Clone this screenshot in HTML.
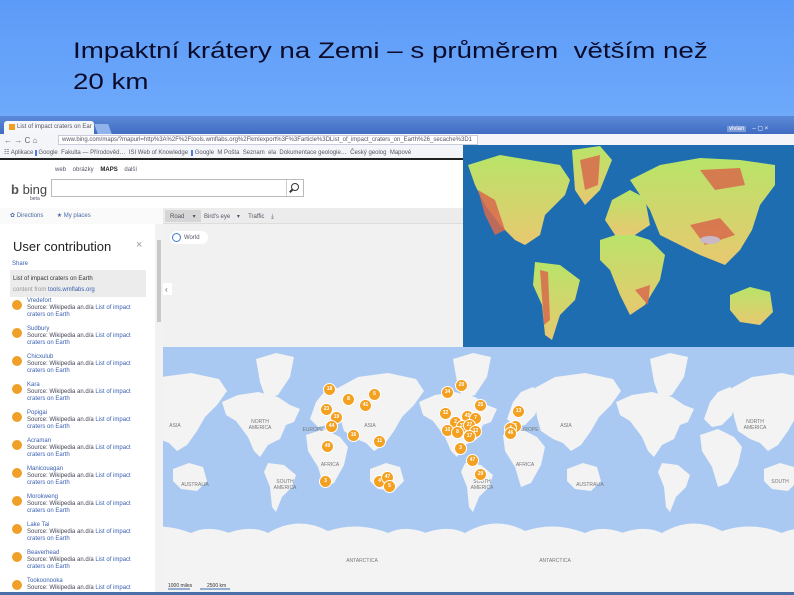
<!DOCTYPE html>
<html><head><meta charset="utf-8">
<style>
*{margin:0;padding:0;box-sizing:border-box}
body{width:794px;height:595px;overflow:hidden;position:relative;font-family:"Liberation Sans",sans-serif;background:#fff}
.abs{position:absolute}
.title{left:0;top:0;width:794px;height:116px;background:linear-gradient(#5c9bf8,#6ea9fa)}
.title h1{position:absolute;left:73px;top:35px;font-weight:normal;font-size:22px;line-height:31px;color:#0b0b2a;transform:scaleX(1.26);transform-origin:0 0;white-space:nowrap}
.sm{font-size:6px;color:#556;white-space:nowrap}
.cl{position:absolute;width:13px;height:13px;border-radius:50%;background:#f4a020;border:1.5px solid #fff;color:#fff;font-size:5px;text-align:center;line-height:10px;font-weight:bold}
.li{position:absolute;left:12px;font-size:6px;line-height:7px;color:#445;white-space:nowrap}
.li b{position:absolute;left:0;top:2px;width:10px;height:10px;border-radius:50%;background:#f0a028}
.li div{margin-left:15px}
.li a{color:#3a5fb0}
</style></head><body>
<div class="abs title"><h1>Impaktní krátery na Zemi – s průměrem&nbsp; větším než<br>20 km</h1></div>
<div class="abs" style="left:0;top:116px;width:794px;height:18px;background:linear-gradient(#5d8ad8,#3f6cc2)"></div>
<div class="abs" style="left:4px;top:121px;width:90px;height:13px;background:#f4f6fa;border-radius:3px 3px 0 0"></div>
<div class="abs" style="left:9px;top:124px;width:6px;height:6px;background:#f0a020"></div>
<div class="abs sm" style="left:17px;top:124px">List of impact craters on Ear ×</div>
<div class="abs" style="left:96px;top:124px;width:14px;height:10px;background:#8fb3ea;transform:skewX(20deg)"></div>
<div class="abs" style="left:727px;top:117px;width:66px;height:9px"><span class="sm" style="color:#fff;background:#7a9ad8;padding:0 2px">vivian</span><span class="sm" style="color:#fff;margin-left:6px">– ▢ ×</span></div>
<div class="abs" style="left:0;top:134px;width:794px;height:12px;background:#f4f5f8"></div>
<div class="abs sm" style="left:4px;top:136px;font-size:8px;color:#666">← → C ⌂</div>
<div class="abs" style="left:58px;top:135px;width:420px;height:10px;background:#fff;border:1px solid #ccd"></div>
<div class="abs sm" style="left:62px;top:137px">www.bing.com/maps/?mapurl=http%3A%2F%2Ftools.wmflabs.org%2Fkmlexport%3F%3Farticle%3DList_of_impact_craters_on_Earth%26_secache%3D1</div>
<div class="abs" style="left:0;top:146px;width:794px;height:12px;background:#f4f5f8"></div>
<div class="abs sm" style="left:4px;top:149px">☷ Aplikace <span style="background:#4a7be0;color:#fff">&nbsp;</span> Google &nbsp;Fakulta — Přírodověd… &nbsp;ISI Web of Knowledge &nbsp;<span style="background:#4a7be0;color:#fff">&nbsp;</span> Google &nbsp;M Pošta &nbsp;Seznam &nbsp;ela &nbsp;Dokumentace geologie… &nbsp;Český geolog &nbsp;Mapové</div>
<div class="abs" style="left:0;top:158px;width:794px;height:2px;background:#222"></div>
<div class="abs sm" style="left:55px;top:167px">web &nbsp;&nbsp; obrázky &nbsp;&nbsp; <b style="color:#222">MAPS</b> &nbsp;&nbsp; další</div>
<div class="abs" style="left:11px;top:182px;font-size:13px;color:#444"><b style="color:#555">b</b> bing</div>
<div class="abs sm" style="left:30px;top:196px;font-size:5px">beta</div>
<div class="abs" style="left:51px;top:179px;width:253px;height:18px;border:1px solid #bbb;background:#fff"></div>
<div class="abs" style="left:286px;top:180px;width:1px;height:16px;background:#ccc"></div>
<div class="abs" style="left:291px;top:183px;width:8px;height:8px;border:1.5px solid #333;border-radius:50%"></div>
<div class="abs" style="left:289px;top:190px;width:4px;height:1.5px;background:#333;transform:rotate(-45deg)"></div>
<div class="abs" style="left:0;top:208px;width:163px;height:16px;background:#fafafa"></div>
<div class="abs sm" style="left:10px;top:212px;color:#4a6aa0">✿ Directions &nbsp;&nbsp;&nbsp;&nbsp;&nbsp;&nbsp; ★ My places</div>
<div class="abs" style="left:163px;top:208px;width:300px;height:16px;background:#ececec;border-bottom:1px solid #ddd"></div>
<div class="abs" style="left:165px;top:210px;width:36px;height:12px;background:#d6d6d6"></div>
<div class="abs sm" style="left:170px;top:213px">Road &nbsp;&nbsp;&nbsp; ▾ &nbsp;&nbsp;&nbsp; Bird's eye &nbsp;&nbsp; ▾ &nbsp;&nbsp;&nbsp; Traffic &nbsp;&nbsp; ⤓</div>
<div class="abs" style="left:163px;top:224px;width:300px;height:123px;background:#f1f1f1"></div>
<div class="abs" style="left:170px;top:231px;width:38px;height:13px;border-radius:7px;background:#fff"></div>
<div class="abs" style="left:172px;top:233px;width:9px;height:9px;border-radius:50%;border:1px solid #3a7ad0"></div>
<div class="abs sm" style="left:184px;top:235px">World</div>
<div class="abs" style="left:163px;top:283px;width:9px;height:12px;background:#fff"></div>
<div class="abs sm" style="left:165px;top:285px;font-size:8px">‹</div>
<div class="abs" style="left:155px;top:224px;width:8px;height:368px;background:#f2f2f2"></div>
<div class="abs" style="left:157px;top:240px;width:4px;height:82px;background:#c8c8c8"></div>
<div class="abs" style="left:13px;top:239px;font-size:13px;color:#222">User contribution</div>
<div class="abs" style="left:136px;top:239px;font-size:11px;color:#999">×</div>
<div class="abs sm" style="left:12px;top:261px;color:#3a5fb0">Share</div>
<div class="abs" style="left:10px;top:270px;width:136px;height:27px;background:#ececec"></div>
<div class="abs sm" style="left:13px;top:276px;color:#333">List of impact craters on Earth</div>
<div class="abs sm" style="left:13px;top:287px;color:#999">content from <span style="color:#3a5fb0">tools.wmflabs.org</span></div>
<div class="li" style="top:298px"><b></b><div><a>Vredefort</a><br>Source: Wikipedia an.d/a <a>List of impact<br>craters on Earth</a></div></div>
<div class="li" style="top:326px"><b></b><div><a>Sudbury</a><br>Source: Wikipedia an.d/a <a>List of impact<br>craters on Earth</a></div></div>
<div class="li" style="top:354px"><b></b><div><a>Chicxulub</a><br>Source: Wikipedia an.d/a <a>List of impact<br>craters on Earth</a></div></div>
<div class="li" style="top:382px"><b></b><div><a>Kara</a><br>Source: Wikipedia an.d/a <a>List of impact<br>craters on Earth</a></div></div>
<div class="li" style="top:410px"><b></b><div><a>Popigai</a><br>Source: Wikipedia an.d/a <a>List of impact<br>craters on Earth</a></div></div>
<div class="li" style="top:438px"><b></b><div><a>Acraman</a><br>Source: Wikipedia an.d/a <a>List of impact<br>craters on Earth</a></div></div>
<div class="li" style="top:466px"><b></b><div><a>Manicouagan</a><br>Source: Wikipedia an.d/a <a>List of impact<br>craters on Earth</a></div></div>
<div class="li" style="top:494px"><b></b><div><a>Morokweng</a><br>Source: Wikipedia an.d/a <a>List of impact<br>craters on Earth</a></div></div>
<div class="li" style="top:522px"><b></b><div><a>Lake Tai</a><br>Source: Wikipedia an.d/a <a>List of impact<br>craters on Earth</a></div></div>
<div class="li" style="top:550px"><b></b><div><a>Beaverhead</a><br>Source: Wikipedia an.d/a <a>List of impact<br>craters on Earth</a></div></div>
<div class="li" style="top:578px"><b></b><div><a>Tookoonooka</a><br>Source: Wikipedia an.d/a <a>List of impact</a></div></div>
<div class="abs" style="left:0;top:592px;width:794px;height:3px;background:#4a6fa8"></div>
<svg class="abs" style="left:163px;top:347px" width="631" height="245" viewBox="163 0 631 245">
<defs><g id="w" fill="#f3f3f3">
<path d="M-6 55 L10 48 L30 45 L50 50 L62 58 L72 62 L66 75 L58 78 L52 92 L40 98 L32 110 L26 104 L20 90 L8 74 L-2 68 Z"/>
<path d="M28 12 L48 6 L66 10 L62 30 L50 48 L38 52 L32 35 Z"/>
<path d="M40 116 L56 118 L68 128 L64 140 L54 150 L48 165 L44 160 L42 140 L36 125 Z"/>
<path d="M78 88 L96 82 L112 90 L120 100 L116 118 L106 136 L96 140 L90 120 L80 104 Z"/>
<path d="M82 72 L88 55 L96 45 L108 40 L116 50 L110 68 L100 78 L90 80 Z"/>
<path d="M108 42 L130 30 L160 26 L188 32 L196 44 L186 58 L174 70 L166 84 L156 98 L146 104 L138 96 L128 92 L116 84 L112 70 Z"/>
<path d="M142 122 L158 116 L172 120 L176 134 L166 144 L150 142 L142 134 Z"/>
<path d="M-10 190 Q20 176 40 186 Q70 168 100 184 Q130 174 160 186 Q180 176 207 190 L207 245 L-10 245 Z"/>
</g></defs>
<rect x="163" y="0" width="631" height="245" fill="#a9c9f2"/>
<use href="#w" x="31"/><use href="#w" x="228"/><use href="#w" x="425"/><use href="#w" x="622"/>
<g font-family="Liberation Sans" font-size="5" fill="#777" text-anchor="middle">
<text x="175" y="80">ASIA</text><text x="260" y="76">NORTH</text><text x="260" y="82">AMERICA</text>
<text x="313" y="84">EUROPE</text><text x="370" y="80">ASIA</text><text x="330" y="119">AFRICA</text>
<text x="195" y="139">AUSTRALIA</text><text x="285" y="136">SOUTH</text><text x="285" y="142">AMERICA</text>
<text x="362" y="215">ANTARCTICA</text><text x="555" y="215">ANTARCTICA</text>
<text x="528" y="84">EUROPE</text><text x="566" y="80">ASIA</text><text x="525" y="119">AFRICA</text>
<text x="590" y="139">AUSTRALIA</text><text x="482" y="136">SOUTH</text><text x="482" y="142">AMERICA</text>
<text x="755" y="76">NORTH</text><text x="755" y="82">AMERICA</text><text x="780" y="136">SOUTH</text>
</g>
<g font-family="Liberation Sans" font-size="5" fill="#333"><text x="168" y="240">1000 miles</text><text x="207" y="240">2500 km</text></g>
<line x1="168" y1="242" x2="190" y2="242" stroke="#3a6ab0"/><line x1="200" y1="242" x2="230" y2="242" stroke="#3a6ab0"/>
</svg>
<div class="cl" style="left:323px;top:383px">18</div><div class="cl" style="left:342px;top:393px">8</div>
<div class="cl" style="left:368px;top:388px">5</div><div class="cl" style="left:359px;top:399px">41</div>
<div class="cl" style="left:320px;top:403px">23</div><div class="cl" style="left:330px;top:411px">19</div>
<div class="cl" style="left:325px;top:420px">44</div><div class="cl" style="left:347px;top:429px">16</div>
<div class="cl" style="left:373px;top:435px">11</div><div class="cl" style="left:321px;top:440px">49</div>
<div class="cl" style="left:319px;top:475px">3</div><div class="cl" style="left:373px;top:475px">4</div>
<div class="cl" style="left:381px;top:471px">47</div><div class="cl" style="left:383px;top:480px">5</div>
<div class="cl" style="left:455px;top:379px">20</div><div class="cl" style="left:441px;top:386px">34</div>
<div class="cl" style="left:474px;top:399px">25</div><div class="cl" style="left:439px;top:407px">32</div>
<div class="cl" style="left:461px;top:410px">45</div><div class="cl" style="left:469px;top:412px">7</div>
<div class="cl" style="left:449px;top:416px">2</div><div class="cl" style="left:456px;top:420px">23</div>
<div class="cl" style="left:463px;top:419px">27</div><div class="cl" style="left:441px;top:424px">10</div>
<div class="cl" style="left:451px;top:426px">8</div><div class="cl" style="left:469px;top:425px">12</div>
<div class="cl" style="left:463px;top:430px">17</div><div class="cl" style="left:454px;top:442px">3</div>
<div class="cl" style="left:466px;top:454px">47</div><div class="cl" style="left:474px;top:468px">29</div>
<div class="cl" style="left:512px;top:405px">13</div><div class="cl" style="left:509px;top:420px">6</div>
<div class="cl" style="left:504px;top:422px">4</div><div class="cl" style="left:504px;top:427px">46</div>
<svg class="abs" style="left:463px;top:145px" width="331" height="202" viewBox="463 145 331 202">
<defs><linearGradient id="g" x1="0" y1="0" x2="0" y2="1"><stop offset="0" stop-color="#b8e468"/><stop offset="1" stop-color="#e8c870"/></linearGradient></defs>
<rect x="463" y="145" width="331" height="202" fill="#1d6db0"/>
<g fill="url(#g)">
<path d="M468 165 L500 155 L530 160 L560 165 L570 180 L565 195 L555 205 L545 215 L540 235 L525 245 L515 240 L500 225 L485 205 L475 185 Z"/>
<path d="M572 150 L600 146 L612 160 L600 190 L585 205 L575 190 Z"/>
<path d="M535 262 L560 265 L580 280 L575 300 L560 315 L552 340 L545 335 L542 305 L533 285 Z"/>
<path d="M600 240 L625 232 L650 240 L665 255 L660 280 L645 305 L630 315 L620 295 L610 270 L600 260 Z"/>
<path d="M605 220 L612 200 L630 190 L645 198 L650 225 L635 235 L615 235 Z"/>
<path d="M630 180 L660 165 L700 158 L740 160 L775 165 L775 185 L760 205 L752 230 L740 250 L725 265 L700 255 L680 245 L660 235 L650 210 Z"/>
<path d="M730 295 L750 287 L770 292 L773 312 L760 325 L740 322 L730 310 Z"/>
</g>
<g fill="#d86a4c" opacity=".85">
<path d="M478 190 L495 200 L505 230 L495 235 L485 215 Z"/><path d="M580 160 L600 155 L598 185 L585 190 Z"/>
<path d="M540 270 L548 272 L550 320 L544 325 Z"/><path d="M690 225 L720 218 L735 235 L705 245 Z"/>
<path d="M700 170 L740 168 L745 185 L715 190 Z"/><path d="M635 290 L650 285 L648 305 Z"/>
</g>
<ellipse cx="710" cy="240" rx="10" ry="4" fill="#c8b8c8"/>
</svg>
</body></html>
